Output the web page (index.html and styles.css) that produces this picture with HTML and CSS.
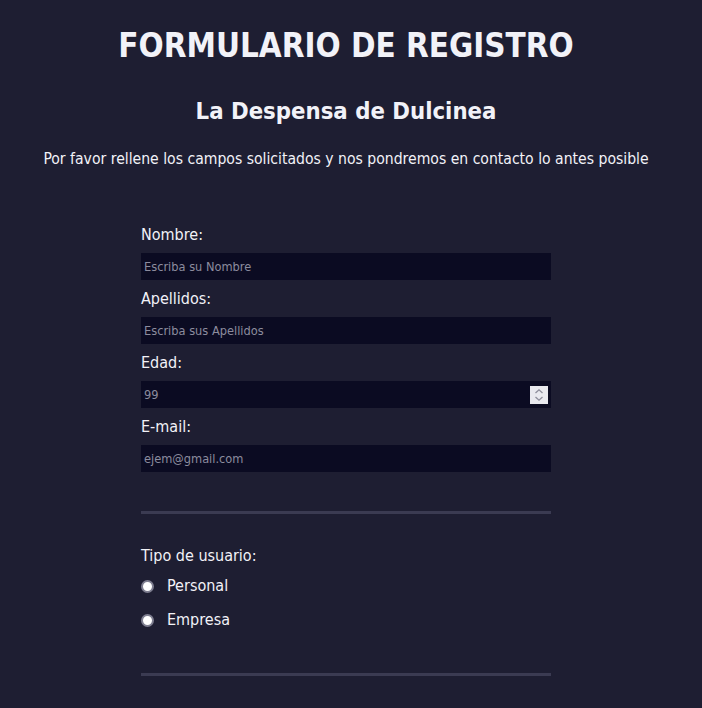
FILE: index.html
```html
<!DOCTYPE html>
<html lang="es">
<head>
<meta charset="utf-8">
<title>Formulario de registro</title>
<link rel="stylesheet" href="styles.css">
</head>
<body>
<div class="page">
  <h1 class="title">FORMULARIO DE REGISTRO</h1>
  <h2 class="subtitle">La Despensa de Dulcinea</h2>
  <p class="intro">Por favor rellene los campos solicitados y nos pondremos en contacto lo antes posible</p>
  <form class="form">
    <div class="fields">
      <div class="field">
        <label class="label" for="nombre">Nombre:</label>
        <div class="box"><input class="input" id="nombre" type="text" placeholder="Escriba su Nombre"></div>
      </div>
      <div class="field">
        <label class="label" for="apellidos">Apellidos:</label>
        <div class="box"><input class="input" id="apellidos" type="text" placeholder="Escriba sus Apellidos"></div>
      </div>
      <div class="field">
        <label class="label" for="edad">Edad:</label>
        <div class="box">
          <input class="input" id="edad" type="number" placeholder="99">
          <span class="spin"><svg width="10" height="14" viewBox="0 0 10 14"><path d="M1.5 5 L5 1.8 L8.5 5 M1.5 9 L5 12.2 L8.5 9" fill="none" stroke="#8e8e9c" stroke-width="1.3"/></svg></span>
        </div>
      </div>
      <div class="field">
        <label class="label" for="email">E-mail:</label>
        <div class="box"><input class="input" id="email" type="email" placeholder="ejem@gmail.com"></div>
      </div>
    </div>
    <hr class="rule">
    <div class="group">
      <div class="label">Tipo de usuario:</div>
      <label class="option option-first"><input class="radio" type="radio" name="tipo"><span>Personal</span></label>
      <label class="option"><input class="radio" type="radio" name="tipo"><span>Empresa</span></label>
    </div>
    <hr class="rule rule-bottom">
  </form>
</div>
</body>
</html>
```
FILE: styles.css
```css
html, body {
  margin: 0;
  padding: 0;
  background: #1e1e32;
}
body {
  color: #f2f2f8;
  font-family: "DejaVu Sans Condensed", "DejaVu Sans", sans-serif;
  font-stretch: condensed;
}
.page {
  width: 692px;
  display: flex;
  flex-direction: column;
  align-items: center;
}
.title {
  margin: 27px 0 0;
  font-size: 32.9px;
  line-height: 38px;
  font-weight: bold;
}
.subtitle {
  margin: 32px 0 0;
  font-size: 23.7px;
  line-height: 28px;
  font-weight: bold;
}
.intro {
  margin: 24px 0 0;
  font-size: 15.6px;
  line-height: 20px;
}
.form {
  width: 410px;
  margin-top: 56px;
  display: flex;
  flex-direction: column;
}
.fields {
  display: flex;
  flex-direction: column;
  gap: 9px;
}
.field {
  display: flex;
  flex-direction: column;
  gap: 8px;
}
.label {
  font-size: 16px;
  line-height: 20px;
}
.box {
  height: 27px;
  background: #0b0b22;
  display: flex;
  align-items: center;
}
.input {
  flex: 1;
  min-width: 0;
  height: 27px;
  box-sizing: border-box;
  border: 0;
  outline: 0;
  background: transparent;
  padding: 0 3px;
  color: #d0d0dc;
  font-family: inherit;
  font-stretch: condensed;
  font-size: 12.7px;
}
.input::placeholder {
  color: #8c8c9e;
}
.input::-webkit-inner-spin-button,
.input::-webkit-outer-spin-button {
  -webkit-appearance: none;
  margin: 0;
}
.spin {
  width: 18px;
  height: 18px;
  margin-right: 3px;
  background: #e9e9ef;
  display: flex;
  align-items: center;
  justify-content: center;
}
.rule {
  margin: 39px 0 0;
  border: 0;
  height: 3px;
  background: #3b3b52;
}
.group {
  margin-top: 32px;
  display: flex;
  flex-direction: column;
  gap: 10px;
}
.option {
  display: flex;
  align-items: center;
  gap: 13px;
  font-size: 16px;
  line-height: 24px;
}
.option-first {
  margin-top: -2px;
}
.radio {
  -webkit-appearance: none;
  appearance: none;
  margin: 0;
  width: 13px;
  height: 13px;
  border-radius: 50%;
  background: #ffffff;
  border: 2px solid #7e7e90;
  box-sizing: border-box;
}
.rule-bottom {
  margin-top: 41px;
}
```
